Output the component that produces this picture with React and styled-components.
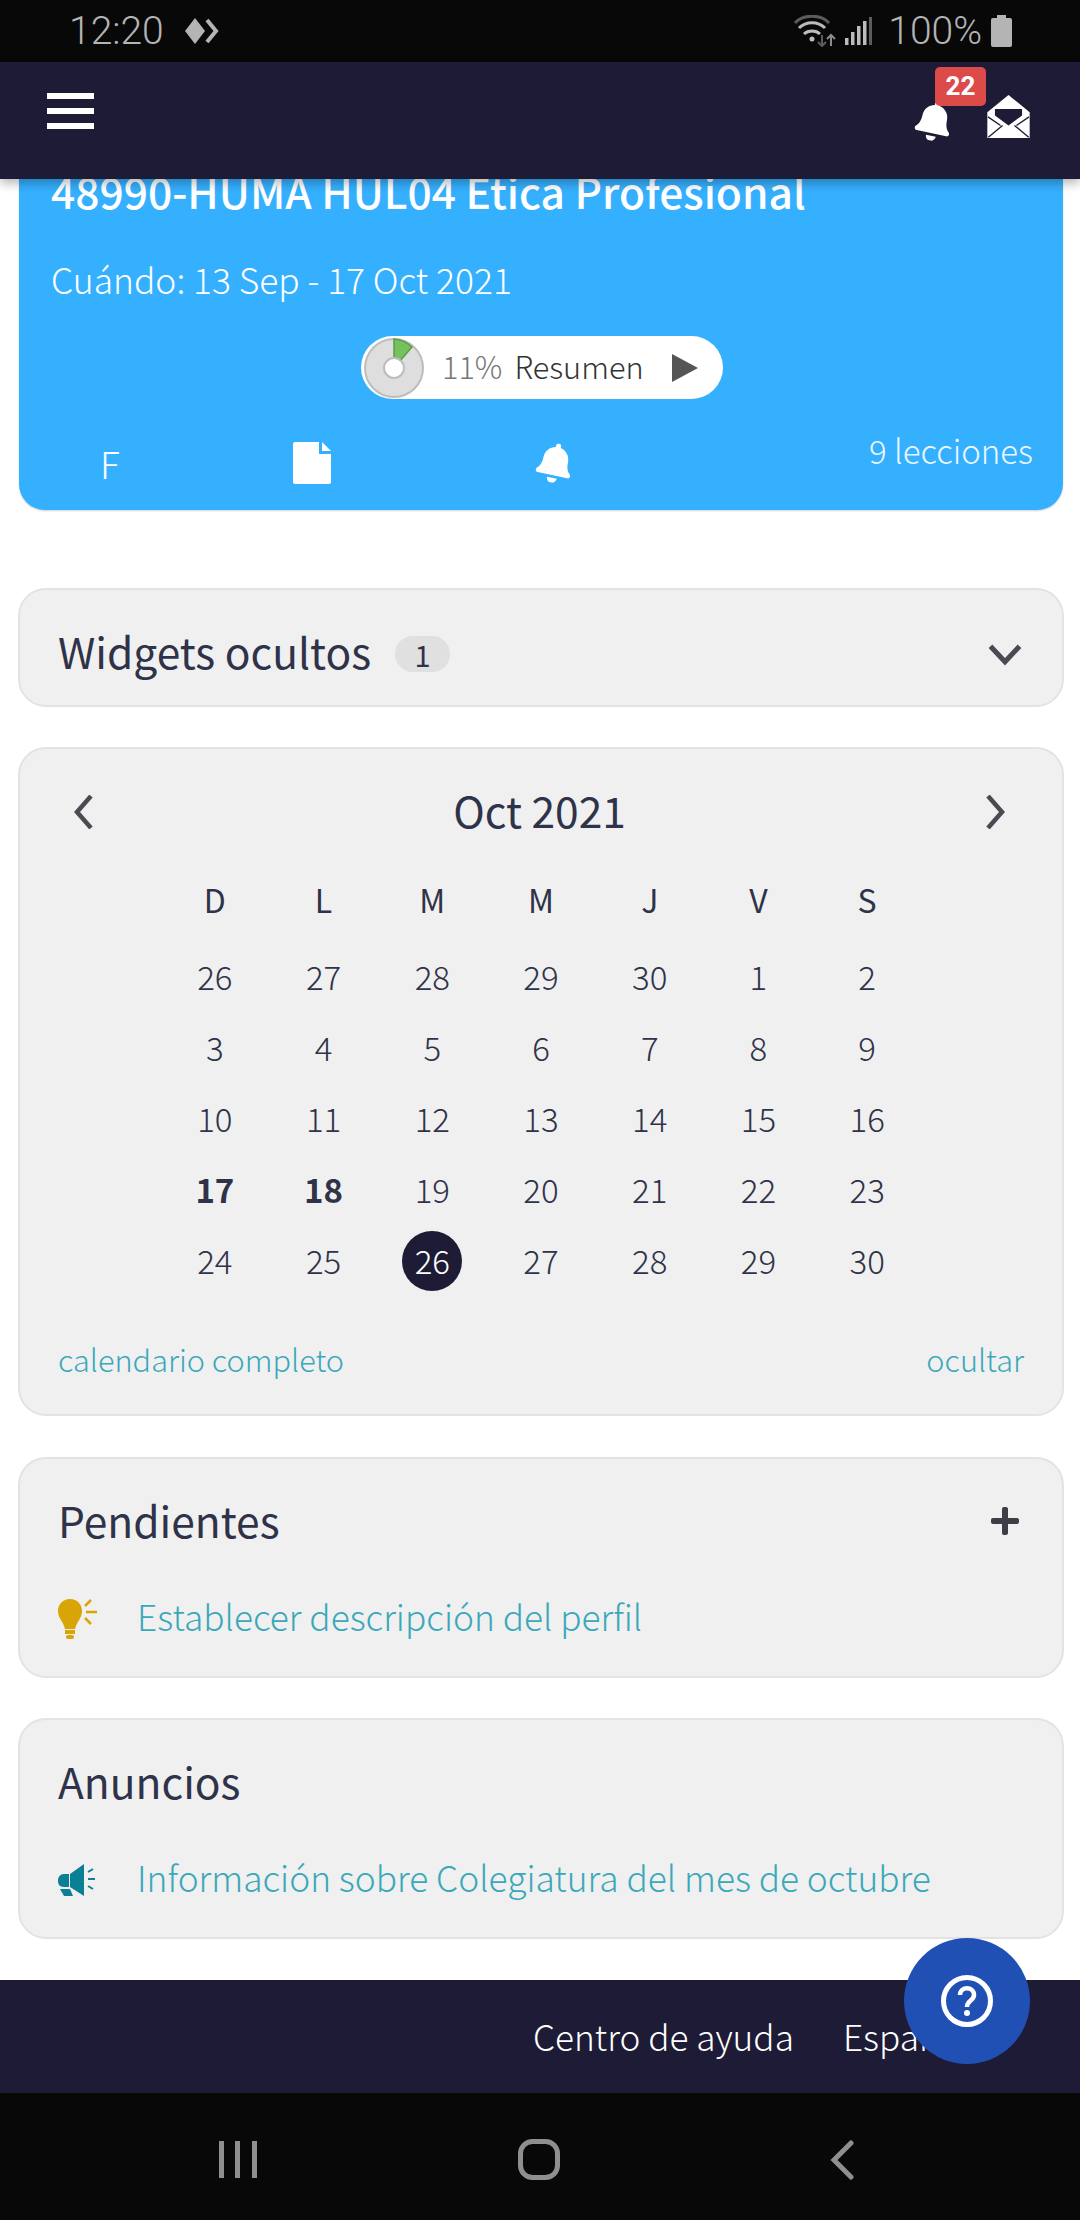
import React from "react";
import styled, { createGlobalStyle } from "styled-components";
import { FaBell, FaPlus } from "react-icons/fa";

const GlobalStyle = createGlobalStyle`
  html, body {
    margin: 0;
    padding: 0;
    background: #fff;
  }
  * {
    box-sizing: border-box;
  }
`;

const Screen = styled.div`
  position: relative;
  width: 1080px;
  height: 2220px;
  display: flex;
  flex-direction: column;
  overflow: hidden;
  font-family: "Noto Sans CJK SC", "Noto Sans", sans-serif;
  font-weight: 300;
  line-height: 1.2;
  color: #2f3349;
  background: #fff;
`;

const StatusBar = styled.div`
  height: 62px;
  flex: none;
  background: #080808;
  color: #b4b4b4;
  display: flex;
  align-items: center;
  justify-content: space-between;
  padding: 0 68px 0 69px;
  font-family: "Roboto", sans-serif;
  font-weight: 300;
  font-size: 39px;
`;

const StatusGroup = styled.div`
  display: flex;
  align-items: center;
  gap: ${(p) => p.$gap || 10}px;
`;

const SignalIcon = styled.svg`
  margin-right: 7px;
`;

const NavBar = styled.div`
  position: relative;
  z-index: 2;
  height: 117px;
  flex: none;
  background: #1e1b36;
  box-shadow: 0 4px 10px rgba(0, 0, 0, 0.3);
  display: flex;
  justify-content: space-between;
  padding: 31px 50px 0 47px;
`;

const Burger = styled.div`
  width: 47px;
  height: 36px;
  display: flex;
  flex-direction: column;
  justify-content: space-between;
`;

const BurgerLine = styled.span`
  display: block;
  height: 6px;
  background: #fff;
`;

const NavIcons = styled.div`
  display: flex;
  gap: 33px;
  padding-top: 2px;
  color: #fff;
`;

const BellWrap = styled.div`
  position: relative;
  width: 40px;
  height: 40px;
  margin-top: 6px;
  font-size: 40px;
  line-height: 0;
`;

const TiltedBell = styled(FaBell)`
  transform: rotate(12deg);
`;

const Badge = styled.span`
  position: absolute;
  left: 21px;
  top: -34px;
  width: 51px;
  height: 39px;
  border-radius: 5px;
  background: #dc4a4a;
  color: #fff;
  font-family: "Roboto", sans-serif;
  font-size: 26px;
  font-weight: 700;
  line-height: 38px;
  text-align: center;
`;

const Content = styled.div`
  flex: 1;
  display: flex;
  flex-direction: column;
  padding: 0 16px 0 18px;
`;

const CourseCard = styled.div`
  flex: none;
  height: 331px;
  margin: 0 1px 78px;
  background: #35b0ff;
  border-radius: 0 0 26px 26px;
  box-shadow: 0 1px 2px rgba(0, 0, 0, 0.18);
  color: #fff;
  display: flex;
  flex-direction: column;
  padding: 0 30px 0 32px;
`;

const CourseTitle = styled.div`
  font-size: 42.5px;
  font-weight: 500;
  line-height: 52px;
  margin-top: -14px;
  white-space: nowrap;
`;

const CourseDates = styled.div`
  font-size: 35.4px;
  line-height: 44px;
  margin-top: 40px;
`;

const PillRow = styled.div`
  display: flex;
  justify-content: center;
  margin-top: 35px;
`;

const Pill = styled.div`
  width: 362px;
  height: 63px;
  border-radius: 32px;
  background: #fff;
  display: flex;
  align-items: center;
  padding-left: 2px;
  font-size: 30.7px;
  color: #333;
`;

const PillLabel = styled.span`
  margin-bottom: 3px;
`;

const Percent = styled(PillLabel)`
  color: #777;
  margin-left: 17px;
  margin-right: 12px;
`;

const ResumenArrow = styled.span`
  margin-left: 28px;
  width: 0;
  height: 0;
  border-left: 26px solid #555;
  border-top: 14px solid transparent;
  border-bottom: 14px solid transparent;
`;

const CourseFooter = styled.div`
  display: grid;
  grid-template-columns: 193px 242px 1fr auto;
  grid-template-rows: 44px;
  margin-top: 42px;
  padding-left: 49px;
  align-items: center;
`;

const FooterIcon = styled.div`
  font-size: ${(p) => p.$size || 36}px;
  line-height: 1;
  display: flex;
  align-items: center;
`;

const Lessons = styled.div`
  font-size: 33px;
  margin-bottom: 24px;
  opacity: 0.9;
`;

const Card = styled.div`
  flex: none;
  background: #f0f0f0;
  border: 2px solid #e3e3e3;
  border-radius: 28px;
  margin-bottom: ${(p) => p.$after || 41}px;
  height: ${(p) => p.$height}px;
  padding: 0 38px;
`;

const WidgetsCard = styled(Card)`
  display: flex;
  align-items: center;
  justify-content: space-between;
  padding-top: 12px;
`;

const WidgetsLabel = styled.div`
  display: flex;
  align-items: center;
  gap: 24px;
  margin-bottom: 6px;
  font-size: 42.5px;
  font-weight: 400;
`;

const Count = styled.span`
  width: 55px;
  height: 36px;
  margin-top: 6px;
  border-radius: 18px;
  background: #e0e0e0;
  font-size: 29px;
  font-weight: 400;
  line-height: 36px;
  text-align: center;
`;

const CalendarHead = styled.div`
  display: flex;
  align-items: center;
  justify-content: space-between;
  padding: 0 14px 0 11px;
  height: 60px;
  margin-top: 33px;
`;

const MonthTitle = styled.div`
  margin-bottom: 6px;
  font-size: 42.5px;
  font-weight: 400;
`;

const CalendarGrid = styled.div`
  width: 761px;
  margin: 16px auto 0;
  display: grid;
  grid-template-columns: repeat(7, 1fr);
  grid-template-rows: 83px;
  grid-auto-rows: 71px;
`;

const DayName = styled.div`
  display: flex;
  align-items: center;
  justify-content: center;
  font-size: 32px;
  font-weight: 400;
`;

const Day = styled.div`
  display: flex;
  align-items: center;
  justify-content: center;
  font-size: 33px;
  font-weight: ${(p) => (p.$bold ? 700 : 300)};
`;

const Today = styled.span`
  width: 60px;
  height: 60px;
  border-radius: 50%;
  background: #1e1b36;
  color: #fff;
  display: flex;
  align-items: center;
  justify-content: center;
`;

const CalendarFooter = styled.div`
  display: flex;
  justify-content: space-between;
  margin-top: 45px;
`;

const LinkText = styled.a`
  color: #3ba8ba;
  font-size: ${(p) => p.$size || 35.3}px;
  white-space: nowrap;
`;

const ItemLink = styled(LinkText)`
  margin-bottom: 6px;
`;

const CardHead = styled.div`
  display: flex;
  align-items: center;
  justify-content: space-between;
  margin-top: 32px;
  height: 62px;
`;

const CardTitle = styled.div`
  margin-bottom: 6px;
  font-size: 42.5px;
  font-weight: 400;
`;

const PlusIcon = styled(FaPlus)`
  font-size: 32px;
  color: #3e3e46;
  margin: 0 3px 2px 0;
`;

const ItemRow = styled.div`
  display: flex;
  align-items: center;
  gap: 40px;
  margin-top: 42px;
`;

const ItemIcon = styled.svg`
  width: 39px;
  height: 40px;
  flex: none;
`;

const Footer = styled.div`
  flex: none;
  height: 113px;
  background: #1e1b36;
  color: #fff;
  display: flex;
  align-items: center;
  gap: 49px;
  padding-left: 533px;
  font-size: 35.2px;
`;

const HelpButton = styled.div`
  position: absolute;
  left: 904px;
  top: 1938px;
  width: 126px;
  height: 126px;
  border-radius: 50%;
  background: #2150b5;
  display: flex;
  align-items: center;
  justify-content: center;
  z-index: 3;
`;

const SystemNav = styled.div`
  flex: none;
  height: 127px;
  padding-top: 6px;
  background: #080808;
  display: grid;
  grid-template-columns: 518px 42px 1fr;
  align-items: center;
`;

const NavSlot = styled.div`
  display: flex;
  padding-left: ${(p) => p.$left || 0}px;
`;

const weeks = [
  [26, 27, 28, 29, 30, 1, 2],
  [3, 4, 5, 6, 7, 8, 9],
  [10, 11, 12, 13, 14, 15, 16],
  [17, 18, 19, 20, 21, 22, 23],
  [24, 25, 26, 27, 28, 29, 30],
];

const dayNames = ["D", "L", "M", "M", "J", "V", "S"];

function Chevron({ dir, size = 34 }) {
  const points = {
    left: "22,1 8,17 22,33",
    right: "12,1 26,17 12,33",
    down: "4,10 17,24 30,10",
  };
  return (
    <svg width={size} height={size} viewBox="0 0 34 34" fill="none">
      <polyline points={points[dir]} stroke="#4a4b52" strokeWidth="4.5" />
    </svg>
  );
}

function Donut() {
  return (
    <svg width="62" height="62" viewBox="0 0 62 62">
      <circle cx="31" cy="31" r="29" fill="#dedede" stroke="#bdbdbd" strokeWidth="2" />
      <path d="M31 2 A29 29 0 0 1 49 10 L36 25 L31 22 Z" fill="#75c15d" stroke="#5d9c49" strokeWidth="1.5" />
      <circle cx="31" cy="31" r="10" fill="#fff" stroke="#bdbdbd" strokeWidth="2" />
    </svg>
  );
}

function FileIcon() {
  return (
    <svg width="38" height="42" viewBox="0 0 38 42" fill="#fff">
      <path d="M2 0 H26 V12 H38 V40 Q38 42 36 42 H2 Q0 42 0 40 V2 Q0 0 2 0Z" />
      <path d="M29 0 L38 9 H29Z" />
    </svg>
  );
}

function EnvelopeOpen() {
  return (
    <svg width="43" height="43" viewBox="0 0 128 130">
      <path d="M64 0 L128 52 V130 H0 V52 Z" fill="#fff" />
      <path d="M23 42 H105 V62 L64 92 L23 62 Z" fill="#1e1b36" />
      <path d="M2 66 L40 92 M126 66 L88 92 M3 128 L46 92 M125 128 L82 92" stroke="#1e1b36" strokeWidth="4" />
    </svg>
  );
}

function Bulb() {
  return (
    <ItemIcon viewBox="0 0 39 40">
      <path d="M12 0C5 0 0 5 0 12c0 7 5 10 7 18h10c2-8 7-11 7-18C24 5 19 0 12 0Z" fill="#d9a406" />
      <rect x="7" y="31" width="10" height="4" fill="#d9a406" />
      <rect x="8" y="36" width="8" height="4" rx="2" fill="#d9a406" />
      <path d="M27 7 L33 1 M28 13 H39 M27 19 L33 25" stroke="#d9a406" strokeWidth="2.5" />
    </ItemIcon>
  );
}

function Bullhorn() {
  return (
    <ItemIcon viewBox="0 0 39 40">
      <path d="M6 14 H11 V27 H6 C1 27 0 24 0 20.5 C0 17 2 14 6 14Z" fill="#0b7f96" />
      <path d="M12 14 L26 4 V36 L12 27Z" fill="#0b7f96" />
      <path d="M2 29 H12 L15 36 H6Z" fill="#0b7f96" />
      <path d="M30 12 L35 9 M30 19 H37 M30 26 L35 29" stroke="#0b7f96" strokeWidth="2" />
    </ItemIcon>
  );
}

function Wifi() {
  return (
    <svg width="42" height="32" viewBox="0 0 42 32" fill="none">
      <path d="M1 8 C9 -1 27 -1 35 8" stroke="#5c5c5c" strokeWidth="3" />
      <path d="M5 13 C12 6 24 6 31 13" stroke="#bcbcbc" strokeWidth="3" />
      <path d="M10 19 C14 15 22 15 26 19" stroke="#bcbcbc" strokeWidth="3" />
      <circle cx="18" cy="24" r="2.5" fill="#bcbcbc" />
      <path d="M28 20 V31 M24 27 L28 31 L32 27" stroke="#5c5c5c" strokeWidth="2" />
      <path d="M37 31 V20 M33 24 L37 20 L41 24" stroke="#8c8c8c" strokeWidth="2" />
    </svg>
  );
}

export default function App() {
  return (
    <Screen>
      <GlobalStyle />
      <StatusBar>
        <StatusGroup $gap={20}>
          <span>12:20</span>
          <svg width="35" height="26" viewBox="0 0 35 26">
            <path d="M11 0 L21 13 L11 26 L1 13Z" fill="#b4b4b4" />
            <path d="M23 2 L32 13 L23 24" stroke="#b4b4b4" strokeWidth="4" fill="none" />
          </svg>
        </StatusGroup>
        <StatusGroup $gap={9}>
          <Wifi />
          <SignalIcon width="27" height="28" viewBox="0 0 27 28" fill="#bcbcbc">
            <rect x="0" y="21" width="3.5" height="7" />
            <rect x="6" y="15" width="3.5" height="13" />
            <rect x="12" y="9" width="3.5" height="19" />
            <rect x="18" y="4" width="3.5" height="24" />
            <rect x="24" y="0" width="3" height="28" fill="#5c5c5c" />
          </SignalIcon>
          <span>100%</span>
          <svg width="21" height="32" viewBox="0 0 21 32" fill="#b4b4b4">
            <rect x="6" y="0" width="9" height="4" />
            <rect x="0" y="3" width="21" height="29" rx="2" />
          </svg>
        </StatusGroup>
      </StatusBar>

      <NavBar>
        <Burger>
          <BurgerLine />
          <BurgerLine />
          <BurgerLine />
        </Burger>
        <NavIcons>
          <BellWrap>
            <TiltedBell />
            <Badge>22</Badge>
          </BellWrap>
          <EnvelopeOpen />
        </NavIcons>
      </NavBar>

      <Content>
        <CourseCard>
          <CourseTitle>48990-HUMA HUL04 Etica Profesional</CourseTitle>
          <CourseDates>Cuándo: 13 Sep - 17 Oct 2021</CourseDates>
          <PillRow>
            <Pill>
              <Donut />
              <Percent>11%</Percent>
              <PillLabel>Resumen</PillLabel>
              <ResumenArrow />
            </Pill>
          </PillRow>
          <CourseFooter>
            <FooterIcon $size={37}>F</FooterIcon>
            <FileIcon />
            <FooterIcon $size={40}>
              <TiltedBell />
            </FooterIcon>
            <Lessons>9 lecciones</Lessons>
          </CourseFooter>
        </CourseCard>

        <WidgetsCard $height={119} $after={40}>
          <WidgetsLabel>
            <span>Widgets ocultos</span>
            <Count>1</Count>
          </WidgetsLabel>
          <Chevron dir="down" size={38} />
        </WidgetsCard>

        <Card $height={669} $after={41}>
          <CalendarHead>
            <Chevron dir="left" />
            <MonthTitle>Oct 2021</MonthTitle>
            <Chevron dir="right" />
          </CalendarHead>
          <CalendarGrid>
            {dayNames.map((d, i) => (
              <DayName key={i}>{d}</DayName>
            ))}
            {weeks.map((week, w) =>
              week.map((d, i) => (
                <Day key={`${w}-${i}`} $bold={w === 3 && i < 2}>
                  {w === 4 && i === 2 ? <Today>{d}</Today> : d}
                </Day>
              ))
            )}
          </CalendarGrid>
          <CalendarFooter>
            <LinkText $size={30.7}>calendario completo</LinkText>
            <LinkText $size={30.7}>ocultar</LinkText>
          </CalendarFooter>
        </Card>

        <Card $height={221} $after={40}>
          <CardHead>
            <CardTitle>Pendientes</CardTitle>
            <PlusIcon />
          </CardHead>
          <ItemRow>
            <Bulb />
            <ItemLink>Establecer descripción del perfil</ItemLink>
          </ItemRow>
        </Card>

        <Card $height={221} $after={41}>
          <CardHead>
            <CardTitle>Anuncios</CardTitle>
          </CardHead>
          <ItemRow>
            <Bullhorn />
            <ItemLink>Información sobre Colegiatura del mes de octubre</ItemLink>
          </ItemRow>
        </Card>
      </Content>

      <Footer>
        <span>Centro de ayuda</span>
        <span>Español</span>
      </Footer>

      <HelpButton>
        <svg width="52" height="52" viewBox="0 0 52 52" fill="none">
          <circle cx="26" cy="26" r="23.5" stroke="#fff" strokeWidth="5" />
          <path d="M19 20 C19 11 33 11 33 20 C33 26 26 25 26 32" stroke="#fff" strokeWidth="4.5" />
          <circle cx="26" cy="38" r="3" fill="#fff" />
        </svg>
      </HelpButton>

      <SystemNav>
        <NavSlot $left={219}>
          <svg width="38" height="37" viewBox="0 0 38 37" fill="#8f8f8f">
            <rect x="0" y="0" width="5" height="37" />
            <rect x="16" y="0" width="5" height="37" />
            <rect x="33" y="0" width="5" height="37" />
          </svg>
        </NavSlot>
        <NavSlot>
          <svg width="42" height="41" viewBox="0 0 42 41" fill="none">
            <rect x="2.5" y="2.5" width="37" height="36" rx="12" stroke="#8f8f8f" strokeWidth="5" />
          </svg>
        </NavSlot>
        <NavSlot $left={270}>
          <svg width="24" height="40" viewBox="0 0 24 40" fill="none">
            <polyline points="21,3 4,20 21,37" stroke="#8f8f8f" strokeWidth="5" strokeLinecap="round" />
          </svg>
        </NavSlot>
      </SystemNav>
    </Screen>
  );
}
